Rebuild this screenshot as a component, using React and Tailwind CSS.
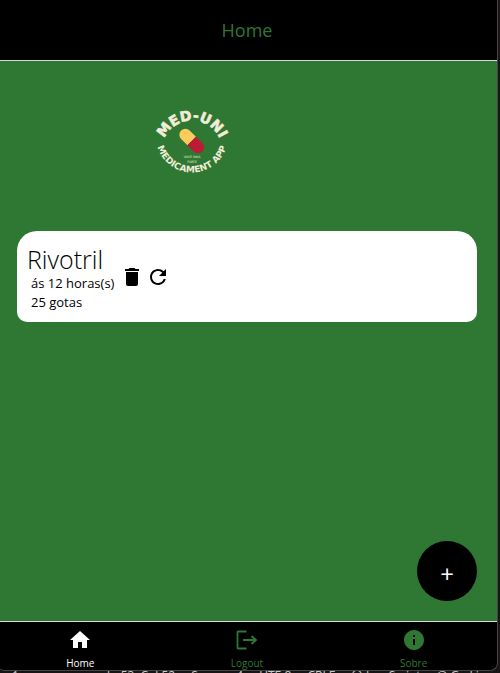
import { MdDelete, MdRefresh, MdHome, MdInfo } from "react-icons/md";

const tabs = [
  { label: "Home", Icon: MdHome, color: "text-white" },
  { label: "Logout", Icon: LogoutIcon, color: "text-[#2f7833]" },
  { label: "Sobre", Icon: MdInfo, color: "text-[#2f7833]" },
];

const status = ["1", "anonymous, ln 53, Col 52", "Spaces: 4", "UTF-8", "CRLF", "{ } JavaScript", "@ Go Live"];

function LogoutIcon({ className }) {
  return (
    <svg viewBox="0 0 24 24" className={className} fill="none" stroke="currentColor" strokeWidth="1.800">
      <path d="M11.500 3.500H3.500a1 1 0 0 0-1 1v15a1 1 0 0 0 1 1h8M8 12h13M16.500 8l4.500 4-4.500 4" />
    </svg>
  );
}

function Logo() {
  return (
    <svg viewBox="130 90 125 100" className="h-[100px] w-[125px]" role="img" aria-label="Med-Uni Medicament App">
      <defs>
        <path id="arc-top" d="M162 150.500A30 30 0 0 1 222 150.500" />
        <path id="arc-bottom" d="M156 136.500A36 36 0 0 0 228 136.500" />
      </defs>
      <g fill="#f3ecd8" fontFamily="'DejaVu Sans', sans-serif" fontWeight="700" textAnchor="middle">
        <text fontSize="14" stroke="#f3ecd8" strokeWidth="0.600">
          <textPath href="#arc-top" startOffset="50%">MED-UNI</textPath>
        </text>
        <text fontSize="9">
          <textPath href="#arc-bottom" startOffset="50%">MEDICAMENT APP</textPath>
        </text>
        <g fontSize="3" fontWeight="400">
          <text x="192" y="158">VOCÊ MAIS</text>
          <text x="192" y="163">FORTE</text>
        </g>
      </g>
      <g transform="rotate(45 191.700 141)">
        <path d="M191.700 135h-9a6 6 0 0 0 0 12h9z" fill="#fdcb5b" />
        <path d="M191.700 135h9a6 6 0 0 1 0 12h-9z" fill="#bd1a36" />
      </g>
    </svg>
  );
}

export default function App() {
  return (
    <div className="flex h-screen flex-col overflow-hidden bg-[#181415] font-['Open_Sans','Noto_Sans',sans-serif]">
      <div className="mr-[2px] -ml-[3px] flex min-h-0 flex-1 flex-col overflow-hidden rounded-b-lg border-r border-b border-[#444] bg-[#2f7833]">
        <header className="flex h-[61px] shrink-0 items-center justify-center border-b border-[#d8d8d8] bg-black">
          <h1 className="text-lg font-medium text-[#2f7833]">Home</h1>
        </header>

        <main className="flex flex-1 flex-col px-5 pb-5">
          <div className="mt-[29px] ml-[113px]">
            <Logo />
          </div>
          <article className="mt-[41px] flex h-[91px] items-center gap-[6px] rounded-t-[20px] rounded-b-[10px] bg-white px-[10px] text-black">
            <div className="pt-[2px]">
              <h2 className="text-[25px] leading-[30px] font-light">Rivotril</h2>
              <p className="pl-1 text-[13px] leading-[19px]">ás 12 horas(s)</p>
              <p className="pl-1 text-[13px] leading-[19px]">25 gotas</p>
            </div>
            <div className="flex gap-[2px]">
              <button aria-label="Excluir"><MdDelete className="size-6" /></button>
              <button aria-label="Atualizar"><MdRefresh className="size-6" /></button>
            </div>
          </article>
          <button className="mt-auto flex size-[60px] items-center justify-center self-end rounded-full bg-black pt-[6px] text-2xl text-white">
            +
          </button>
        </main>

        <nav className="grid h-[49px] shrink-0 grid-cols-3 border-t border-[#d8d8d8] bg-black">
          {tabs.map(({ label, Icon, color }) => (
            <a key={label} href="#" className={`flex flex-col items-center pt-[6px] ${color}`}>
              <Icon className="size-6 shrink-0" />
              <span className="mt-1 text-[10px] leading-[14px]">{label}</span>
            </a>
          ))}
        </nav>
      </div>
      <footer className="flex h-[2px] shrink-0 gap-4 overflow-hidden px-3 text-xs leading-[9px] whitespace-nowrap text-[#ccc]">
        {status.map((item) => <span key={item}>{item}</span>)}
      </footer>
    </div>
  );
}
